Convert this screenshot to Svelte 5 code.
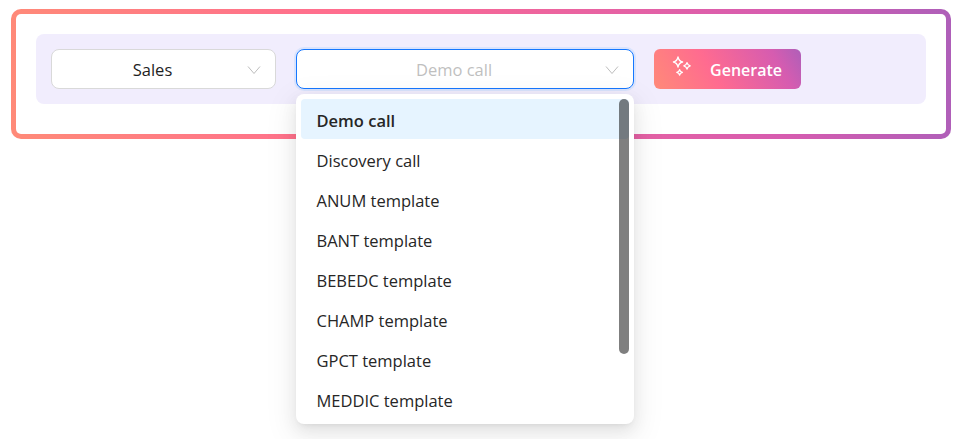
<script lang="ts">
  const templates = [
    'Demo call',
    'Discovery call',
    'ANUM template',
    'BANT template',
    'BEBEDC template',
    'CHAMP template',
    'GPCT template',
    'MEDDIC template',
  ];
  let selected = 'Demo call';
</script>

<div class="page">
  <div class="frame">
    <div class="bar">
      <button type="button" class="select industry">
        <span class="value">Sales</span>
        <svg class="chevron" viewBox="0 0 14 14" width="14" height="14" aria-hidden="true">
          <path d="M1 3.5 7 10.5 13 3.5" fill="none" stroke="currentColor" stroke-width="1" />
        </svg>
      </button>

      <div class="template-wrap">
        <button type="button" class="select template open">
          <span class="value placeholder">{selected}</span>
          <svg class="chevron" viewBox="0 0 14 14" width="14" height="14" aria-hidden="true">
            <path d="M1 3.5 7 10.5 13 3.5" fill="none" stroke="currentColor" stroke-width="1" />
          </svg>
        </button>

        <div class="menu" role="listbox">
          {#each templates as t}
            <div class="option" class:active={t === selected} role="option" aria-selected={t === selected}>{t}</div>
          {/each}
          <div class="thumb"></div>
        </div>
      </div>

      <button type="button" class="generate">
        <svg class="sparkles" viewBox="0 0 24 24" width="24" height="24" aria-hidden="true">
          <g fill="none" stroke="currentColor" stroke-width="1.3" stroke-linejoin="round">
            <path d="M8 2 C8.6 5 9.8 6.4 12.6 7 C9.8 7.6 8.6 9 8 12 C7.4 9 6.2 7.6 3.4 7 C6.2 6.4 7.4 5 8 2 Z" />
            <path d="M17 7.6 C17.4 9.4 18.2 10.2 20.2 10.8 C18.2 11.4 17.4 12.2 17 14 C16.6 12.2 15.8 11.4 13.8 10.8 C15.8 10.2 16.6 9.4 17 7.6 Z" />
            <path d="M9.6 14.6 C9.9 16.2 10.6 16.9 12.4 17.4 C10.6 17.9 9.9 18.6 9.6 20.2 C9.3 18.6 8.6 17.9 6.8 17.4 C8.6 16.9 9.3 16.2 9.6 14.6 Z" />
          </g>
        </svg>
        <span>Generate</span>
      </button>
    </div>
  </div>
</div>

<style>
  :global(body) {
    margin: 0;
    background: #fff;
  }

  .page {
    height: 439px;
    padding: 9px 14px 0 11px;
    box-sizing: border-box;
    overflow: hidden;
    font-family: "Open Sans", "Noto Sans", sans-serif;
  }

  .frame {
    height: 130px;
    box-sizing: border-box;
    padding: 20px;
    border: 5px solid transparent;
    border-radius: 10px;
    background:
      linear-gradient(#fff, #fff) padding-box,
      linear-gradient(86deg, #ff8a78 0%, #ff6b90 38%, #d65cb0 82%, #ae5fb9 100%) border-box;
  }

  .bar {
    height: 70px;
    box-sizing: border-box;
    display: flex;
    align-items: center;
    gap: 20px;
    padding: 0 15px;
    background: #f1edfd;
    border-radius: 8px;
  }

  .select {
    position: relative;
    height: 40px;
    padding: 1px 52px 0 30px;
    display: flex;
    align-items: center;
    justify-content: center;
    background: #fff;
    border: 1px solid #d9d9d9;
    border-radius: 8px;
    font: inherit;
    font-size: 16.5px;
    color: #1f1f1f;
  }

  .select.industry {
    width: 225px;
  }

  .template-wrap {
    position: relative;
    width: 338px;
  }

  .select.template {
    width: 100%;
  }

  .select.open {
    border-color: #1677ff;
    box-shadow: 0 0 0 2px rgba(5, 145, 255, 0.1);
  }

  .placeholder {
    color: #bfbfbf;
  }

  .chevron {
    position: absolute;
    right: 14px;
    top: 13px;
    color: #bdbdbd;
  }

  .menu {
    position: absolute;
    top: 45px;
    left: 0;
    right: 0;
    height: 330px;
    box-sizing: border-box;
    padding: 5px;
    overflow: hidden;
    background: #fff;
    border-radius: 8px;
    box-shadow:
      0 6px 16px rgba(0, 0, 0, 0.08),
      0 3px 6px -4px rgba(0, 0, 0, 0.12),
      0 9px 28px 8px rgba(0, 0, 0, 0.05);
    z-index: 5;
  }

  .option {
    height: 40px;
    line-height: 43px;
    padding: 0 15.5px;
    border-radius: 4px;
    font-size: 16.5px;
    color: #262626;
  }

  .option.active {
    background: #e6f4ff;
    font-weight: 600;
  }

  .thumb {
    position: absolute;
    top: 5px;
    right: 5px;
    width: 10px;
    height: 255px;
    background: rgba(0, 0, 0, 0.5);
    border-radius: 5px;
  }

  .generate {
    height: 40px;
    width: 147px;
    box-sizing: border-box;
    padding: 0 19px 0 16px;
    display: flex;
    align-items: center;
    justify-content: space-between;
    border: 0;
    border-radius: 6px;
    color: #fff;
    font: inherit;
    font-size: 16px;
    font-weight: 600;
    background: linear-gradient(60deg, #ff8a78 0%, #ff6b90 40%, #d65cb0 82%, #ae5fb9 100%);
  }

  .generate span {
    padding-top: 1px;
  }

  .sparkles {
    margin-top: -4px;
  }
</style>
